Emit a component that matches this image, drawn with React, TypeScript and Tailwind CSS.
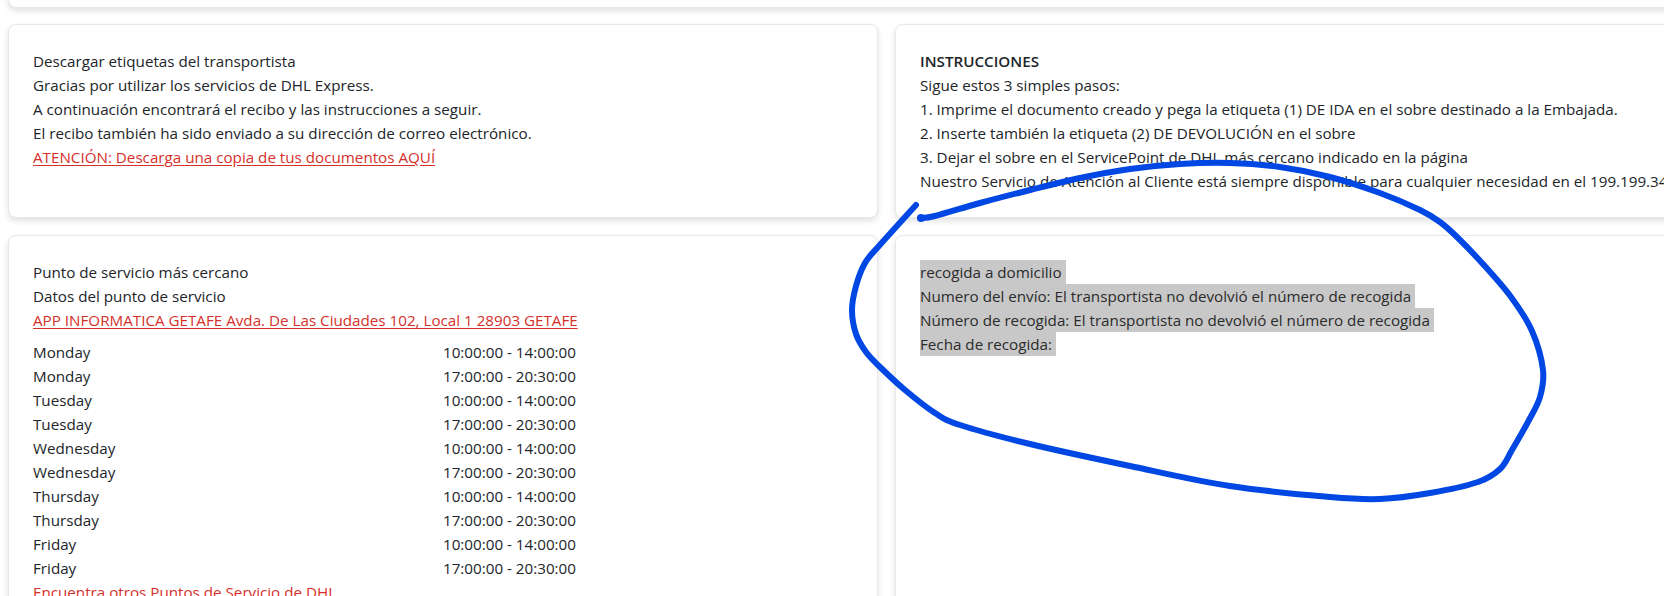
const schedule = [
  ['Monday', '10:00:00 - 14:00:00'],
  ['Monday', '17:00:00 - 20:30:00'],
  ['Tuesday', '10:00:00 - 14:00:00'],
  ['Tuesday', '17:00:00 - 20:30:00'],
  ['Wednesday', '10:00:00 - 14:00:00'],
  ['Wednesday', '17:00:00 - 20:30:00'],
  ['Thursday', '10:00:00 - 14:00:00'],
  ['Thursday', '17:00:00 - 20:30:00'],
  ['Friday', '10:00:00 - 14:00:00'],
  ['Friday', '17:00:00 - 20:30:00'],
];

const pickup = [
  'recogida a domicilio',
  'Numero del envío: El transportista no devolvió el número de recogida',
  'Número de recogida: El transportista no devolvió el número de recogida',
  'Fecha de recogida:',
];

// hand-drawn marker loop over the page
const loop: [number, number][] = [
  [916, 205], [896, 227], [878, 247], [865, 263], [856, 286], [852, 310], [856, 334],
  [866, 352], [880, 367], [905, 390], [935, 413], [960, 425], [1030, 444], [1130, 466],
  [1230, 486], [1330, 497], [1380, 499], [1430, 493], [1478, 482], [1500, 469],
  [1512, 450], [1529, 420], [1540, 397], [1543, 370], [1532, 331], [1511, 297],
  [1482, 263], [1457, 237], [1440, 222], [1420, 210], [1380, 193], [1330, 177],
  [1280, 167], [1230, 163], [1180, 164], [1130, 169], [1080, 178], [1030, 190],
  [980, 203], [935, 216], [921, 218],
];

function smoothPath(pts: [number, number][]) {
  let d = `M${pts[0][0]},${pts[0][1]}`;
  for (let i = 0; i < pts.length - 1; i++) {
    const p0 = pts[Math.max(i - 1, 0)];
    const p1 = pts[i];
    const p2 = pts[i + 1];
    const p3 = pts[Math.min(i + 2, pts.length - 1)];
    const c1x = p1[0] + (p2[0] - p0[0]) / 6;
    const c1y = p1[1] + (p2[1] - p0[1]) / 6;
    const c2x = p2[0] - (p3[0] - p1[0]) / 6;
    const c2y = p2[1] - (p3[1] - p1[1]) / 6;
    d += ` C${c1x},${c1y} ${c2x},${c2y} ${p2[0]},${p2[1]}`;
  }
  return d;
}

function Card({ children }: { children: React.ReactNode }) {
  return (
    <div className="rounded-lg border border-[#e8e8e8] bg-white p-6 shadow-[0_3px_6px_rgba(0,0,0,0.12)]">
      {children}
    </div>
  );
}

export default function App() {
  return (
    <div className="relative h-[596px] w-[1664px] overflow-hidden bg-white font-['Open_Sans',sans-serif] text-[15.2px] leading-6 text-[#212529]">
      <div className="w-[1773px] px-2">
        {/* previous section, scrolled mostly out of view */}
        <div className="-mt-[32px] h-[40px] rounded-lg border border-[#e8e8e8] bg-white shadow-[0_3px_6px_rgba(0,0,0,0.12)]" />

        <div className="mt-4 grid grid-cols-[870px_870px] gap-[17px]">
          <Card>
            <div>Descargar etiquetas del transportista</div>
            <div>Gracias por utilizar los servicios de DHL Express.</div>
            <div>A continuación encontrará el recibo y las instrucciones a seguir.</div>
            <div>El recibo también ha sido enviado a su dirección de correo electrónico.</div>
            <a href="#" className="text-[#d6302b] underline underline-offset-2">
              ATENCIÓN: Descarga una copia de tus documentos AQUÍ
            </a>
          </Card>

          <Card>
            <div className="font-semibold">INSTRUCCIONES</div>
            <div>Sigue estos 3 simples pasos:</div>
            <div>1. Imprime el documento creado y pega la etiqueta (1) DE IDA en el sobre destinado a la Embajada.</div>
            <div>2. Inserte también la etiqueta (2) DE DEVOLUCIÓN en el sobre</div>
            <div>3. Dejar el sobre en el ServicePoint de DHL más cercano indicado en la página</div>
            <div className="whitespace-nowrap">
              Nuestro Servicio de Atención al Cliente está siempre disponible para cualquier necesidad en el 199.199.34
            </div>
          </Card>

          <Card>
            <div>Punto de servicio más cercano</div>
            <div>Datos del punto de servicio</div>
            <a href="#" className="text-[#d6302b] underline underline-offset-2">
              APP INFORMATICA GETAFE Avda. De Las Ciudades 102, Local 1 28903 GETAFE
            </a>
            <div className="mt-2 grid grid-cols-2">
              {schedule.map(([day, time], i) => (
                <div key={i} className="contents">
                  <div>{day}</div>
                  <div>{time}</div>
                </div>
              ))}
            </div>
            <a href="#" className="block text-[#d6302b]">
              Encuentra otros Puntos de Servicio de DHL
            </a>
            <div className="h-24" />
          </Card>

          <Card>
            {pickup.map((line) => (
              <div key={line}>
                <span className="inline-block bg-[#c8c8c8] pr-1 text-[#2b2b2b]">{line}</span>
              </div>
            ))}
          </Card>
        </div>
      </div>

      <svg className="pointer-events-none absolute left-0 top-0" width="1664" height="596" viewBox="0 0 1664 596">
        <path d={smoothPath(loop)} fill="none" stroke="#0047e3" strokeWidth="6" strokeLinecap="round" strokeLinejoin="round" />
        <circle cx="921" cy="218" r="4" fill="#0047e3" />
      </svg>
    </div>
  );
}
